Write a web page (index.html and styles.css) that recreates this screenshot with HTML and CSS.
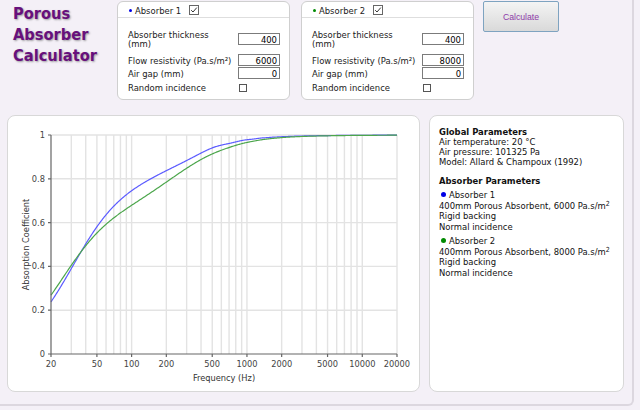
FILE: index.html
```html
<!DOCTYPE html>
<html lang="en">
<head>
<meta charset="utf-8">
<title>Porous Absorber Calculator</title>
<link rel="stylesheet" href="styles.css">
</head>
<body>
<div class="page">
  <div class="top">
    <h1 class="title">Porous Absorber Calculator</h1>

    <div class="absbox">
      <div class="abs-head">
        <span class="bullet blue"></span><span>Absorber 1</span>
        <svg class="check-on" width="10" height="10" viewBox="0 0 10 10"><rect x="0.5" y="0.5" width="9" height="9" fill="#fff" stroke="#666"/><path d="M2.2 5.2 L4 7 L7.8 2.6" fill="none" stroke="#333" stroke-width="1"/></svg>
      </div>
      <div class="abs-body">
        <div class="row tall"><span class="lbl">Absorber thickness<br>(mm)</span><span class="ctl"><input class="num" type="text" value="400"></span></div>
        <div class="row r2"><span class="lbl">Flow resistivity (Pa.s/m²)</span><span class="ctl"><input class="num" type="text" value="6000"></span></div>
        <div class="row"><span class="lbl">Air gap (mm)</span><span class="ctl"><input class="num" type="text" value="0"></span></div>
        <div class="row r4"><span class="lbl">Random incidence</span><span class="ctl"><input class="chk" type="checkbox"></span></div>
      </div>
    </div>

    <div class="absbox">
      <div class="abs-head">
        <span class="bullet green"></span><span>Absorber 2</span>
        <svg class="check-on" width="10" height="10" viewBox="0 0 10 10"><rect x="0.5" y="0.5" width="9" height="9" fill="#fff" stroke="#666"/><path d="M2.2 5.2 L4 7 L7.8 2.6" fill="none" stroke="#333" stroke-width="1"/></svg>
      </div>
      <div class="abs-body">
        <div class="row tall"><span class="lbl">Absorber thickness<br>(mm)</span><span class="ctl"><input class="num" type="text" value="400"></span></div>
        <div class="row r2"><span class="lbl">Flow resistivity (Pa.s/m²)</span><span class="ctl"><input class="num" type="text" value="8000"></span></div>
        <div class="row"><span class="lbl">Air gap (mm)</span><span class="ctl"><input class="num" type="text" value="0"></span></div>
        <div class="row r4"><span class="lbl">Random incidence</span><span class="ctl"><input class="chk" type="checkbox"></span></div>
      </div>
    </div>

    <button class="calc" type="button">Calculate</button>
  </div>

  <div class="bottom">
    <div class="card chart">
      <svg class="plot" viewBox="8 116 411 275" width="411" height="275">
        <g class="grid">
          <path d="M51 135H397M51 178.8H397M51 222.6H397M51 266.4H397M51 310.2H397"/>
          <path d="M71.31 135V354M85.72 135V354M96.9 135V354M106.03 135V354M113.75 135V354M120.44 135V354M126.34 135V354M131.61 135V354M166.33 135V354M186.64 135V354M201.05 135V354M212.23 135V354M221.36 135V354M229.08 135V354M235.77 135V354M241.67 135V354M246.95 135V354M281.67 135V354M301.97 135V354M316.39 135V354M327.56 135V354M336.69 135V354M344.42 135V354M351.1 135V354M357 135V354M362.28 135V354M397 135V354"/>
        </g>
        <path id="curve1" class="curve blue"/>
        <path id="curve2" class="curve green"/>
        <path class="axis" d="M51 135V354H397"/>
        <path class="axis" d="M48 135H51M48 178.8H51M48 222.6H51M48 266.4H51M48 310.2H51M48 354H51"/>
        <path class="axis" d="M51 354V357M96.9 354V357M131.61 354V357M166.33 354V357M212.23 354V357M246.95 354V357M281.67 354V357M327.56 354V357M362.28 354V357M397 354V357"/>
        <g class="ylab">
          <text x="45" y="138">1</text>
          <text x="45" y="181.8">0.8</text>
          <text x="45" y="225.6">0.6</text>
          <text x="45" y="269.4">0.4</text>
          <text x="45" y="313.2">0.2</text>
          <text x="45" y="357">0</text>
        </g>
        <g class="xlab">
          <text x="51" y="367">20</text>
          <text x="96.9" y="367">50</text>
          <text x="131.61" y="367">100</text>
          <text x="166.33" y="367">200</text>
          <text x="212.23" y="367">500</text>
          <text x="246.95" y="367">1000</text>
          <text x="281.67" y="367">2000</text>
          <text x="327.56" y="367">5000</text>
          <text x="362.28" y="367">10000</text>
          <text x="397" y="367">20000</text>
        </g>
        <text class="atitle" x="224" y="380.5">Frequency (Hz)</text>
        <text class="atitle" transform="translate(28.5 244.5) rotate(-90)">Absorption Coefficient</text>
      </svg>
    </div>

    <div class="card info">
      <div class="h">Global Parameters</div>
      <div>Air temperature: 20 °C</div>
      <div>Air pressure: 101325 Pa</div>
      <div>Model: Allard &amp; Champoux (1992)</div>
      <div class="h h2">Absorber Parameters</div>
      <div class="ab">
        <div><span class="dot blue"></span>Absorber 1</div>
        <div>400mm Porous Absorbent, 6000 Pa.s/m<sup>2</sup></div>
        <div>Rigid backing</div>
        <div>Normal incidence</div>
      </div>
      <div class="ab">
        <div><span class="dot green"></span>Absorber 2</div>
        <div>400mm Porous Absorbent, 8000 Pa.s/m<sup>2</sup></div>
        <div>Rigid backing</div>
        <div>Normal incidence</div>
      </div>
    </div>
  </div>
</div>
<script src="script.js"></script>
</body>
</html>
```

FILE: styles.css
```css
* { box-sizing: border-box; }

body {
  margin: 0;
  background: #f4f0f7;
  font-family: "DejaVu Sans Condensed", "DejaVu Sans", sans-serif;
  font-stretch: condensed;
  font-size: 9.4px;
  color: #111;
}

.page {
  width: 634px;
  height: 406px;
  border-right: 2px solid #dcd7df;
  border-bottom: 2px solid #dcd7df;
  border-bottom-right-radius: 6px;
}

.top {
  display: flex;
  align-items: flex-start;
  height: 115px;
}

.title {
  width: 117px;
  margin: 0;
  padding: 3px 0 0 13px;
  font-size: 16.3px;
  line-height: 21px;
  font-weight: bold;
  color: #67107c;
  text-shadow: 1px 1px 2px rgba(0, 0, 0, 0.35);
}

.absbox {
  width: 173px;
  height: 99px;
  margin-top: 1px;
  background: #fff;
  border: 1px solid #cfcfcf;
  border-radius: 6px;
}

.absbox + .absbox { margin-left: 11px; }

.abs-head {
  display: flex;
  align-items: center;
  height: 16px;
  padding: 1px 0 0 11px;
  border-bottom: 1px solid #dedede;
  color: #222;
}

.bullet {
  width: 3px;
  height: 3px;
  border-radius: 50%;
  margin-right: 3px;
}

.bullet.blue, .dot.blue { background: #0000e6; }
.bullet.green, .dot.green { background: #008a00; }

.check-on { margin-left: 8px; }

.abs-body { padding: 11.5px 9px 0 10px; }

.row {
  display: flex;
  align-items: center;
  justify-content: space-between;
  height: 12px;
  margin-top: 1px;
  color: #222;
}

.row.tall { height: 19px; margin-top: 0; line-height: 9.5px; }
.row.r2 { margin-top: 5.5px; }
.row.r4 { margin-top: 2.5px; }

.ctl { width: 42px; display: flex; }

.num {
  width: 42px;
  height: 12px;
  margin: 0;
  padding: 0 2px;
  border: 1px solid #7b7b7b;
  border-radius: 0;
  background: #fff;
  font: inherit;
  color: #000;
  text-align: right;
}

.chk {
  appearance: none;
  -webkit-appearance: none;
  width: 8px;
  height: 8px;
  margin: 0 0 0 1px;
  border: 1px solid #555;
  background: #fff;
}

.calc {
  width: 76px;
  height: 31px;
  margin: 1px 0 0 9px;
  padding: 0;
  border: 1px solid #7ea3c0;
  border-radius: 2px;
  background: linear-gradient(#f4f4f4, #d9d9d9);
  color: #8e3aa8;
  font-family: "Liberation Sans", Arial, sans-serif;
  font-size: 8.7px;
}

.bottom {
  display: flex;
  gap: 9px;
  padding-left: 7px;
}

.card {
  height: 277px;
  background: #fff;
  border: 1px solid #d8d8d8;
  border-radius: 8px;
}

.chart { width: 413px; }

.plot { display: block; }

.grid path { stroke: #e3e3e3; stroke-width: 1.4; fill: none; }
.axis { stroke: #666; stroke-width: 1.2; fill: none; }
.curve { fill: none; stroke-width: 1.2; }
.curve.blue { stroke: #5c5cff; }
.curve.green { stroke: #4ca64c; }

.ylab text, .xlab text, .atitle {
  font-family: "DejaVu Sans Condensed", "DejaVu Sans", sans-serif;
  font-stretch: condensed;
  font-size: 9.2px;
  fill: #444;
}

.ylab text { text-anchor: end; }
.xlab text { text-anchor: middle; }
.atitle { text-anchor: middle; fill: #333; }

.info {
  width: 195px;
  padding: 11px 0 0 9px;
  line-height: 10px;
  color: #111;
}

.h { font-weight: bold; }
.h2 { margin-top: 9.4px; }

.ab { margin-top: 4px; line-height: 10.5px; }

.dot {
  display: inline-block;
  width: 5px;
  height: 5px;
  border-radius: 50%;
  margin: 0 3px 0 2px;
  vertical-align: 1px;
}

sup { font-size: 7px; line-height: 0; vertical-align: 3px; }
```

FILE: script.js
```js
(function () {
  var x0 = 51, x1 = 397, y0 = 354, y1 = 135;
  function px(f) { return x0 + Math.log10(f / 20) / 3 * (x1 - x0); }
  function py(a) { return y0 - a * (y0 - y1); }

  function add(a, b) { return [a[0] + b[0], a[1] + b[1]]; }
  function sub(a, b) { return [a[0] - b[0], a[1] - b[1]]; }
  function mul(a, b) { return [a[0] * b[0] - a[1] * b[1], a[0] * b[1] + a[1] * b[0]]; }
  function div(a, b) {
    var d = b[0] * b[0] + b[1] * b[1];
    return [(a[0] * b[0] + a[1] * b[1]) / d, (a[1] * b[0] - a[0] * b[1]) / d];
  }
  function csqrt(a) {
    var r = Math.hypot(a[0], a[1]), t = Math.atan2(a[1], a[0]), s = Math.sqrt(r);
    return [s * Math.cos(t / 2), s * Math.sin(t / 2)];
  }
  function cot(z) {
    var x = z[0], y = z[1];
    var s = [Math.sin(x) * Math.cosh(y), Math.cos(x) * Math.sinh(y)];
    var c = [Math.cos(x) * Math.cosh(y), -Math.sin(x) * Math.sinh(y)];
    return div(c, s);
  }

  var rho0 = 101325 / (287.05 * 293.15);
  var c0 = 343.2;
  var Z0 = [rho0 * c0, 0];

  function alpha(f, sigma, d) {
    var X = rho0 * f / sigma, w = 2 * Math.PI * f;
    var rho = add([1.2, 0], csqrt([-0.0364 / (X * X), -0.1144 / X]));
    var s = csqrt([2.82 / (X * X), 24.9 / X]);
    var K = mul([101320, 0], div(add([0, 29.64], s), add([0, 21.17], s)));
    var Zc = csqrt(mul(rho, K));
    var k = mul([w, 0], csqrt(div(rho, K)));
    var Zs = mul([0, -1], mul(Zc, cot([k[0] * d, k[1] * d])));
    var R = div(sub(Zs, Z0), add(Zs, Z0));
    return 1 - (R[0] * R[0] + R[1] * R[1]);
  }

  function build(sigma) {
    var n = 500, d = '';
    for (var i = 0; i <= n; i++) {
      var f = 20 * Math.pow(1000, i / n);
      var a = Math.max(0, Math.min(1, alpha(f, sigma, 0.4)));
      d += (i ? 'L' : 'M') + px(f).toFixed(2) + ' ' + py(a).toFixed(2);
    }
    return d;
  }

  document.getElementById('curve1').setAttribute('d', build(6000));
  document.getElementById('curve2').setAttribute('d', build(8000));
})();
```
